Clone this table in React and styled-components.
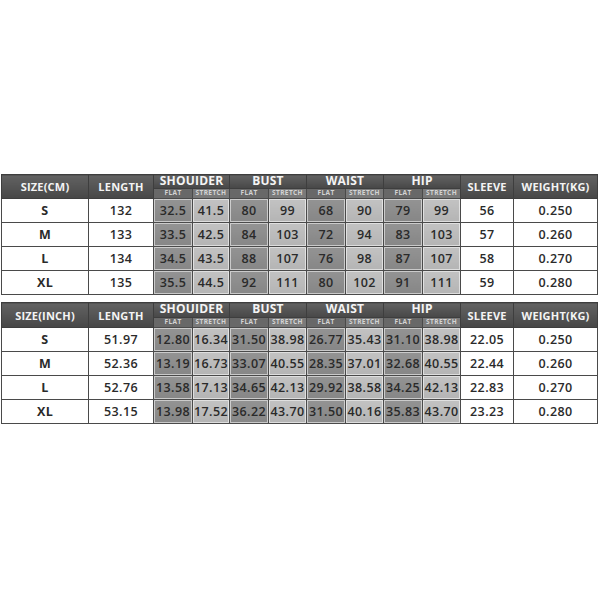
import React from 'react';
import styled, { createGlobalStyle } from 'styled-components';

const GlobalStyle = createGlobalStyle`
    html, body {
        margin: 0;
        padding: 0;
        background: #ffffff;
    }
    body {
        font-family: "Open Sans", "Liberation Sans", sans-serif;
    }
`;

const Page = styled.div`
    width: 600px;
    height: 600px;
    padding: 174px 0 0 1px;
    box-sizing: border-box;
    display: flex;
    flex-direction: column;
    gap: 7px;
`;

const Table = styled.table`
    width: 596px;
    border-collapse: collapse;
    table-layout: fixed;
    color: #222;
`;

const HeadCell = styled.th`
    background: linear-gradient(#626262, #474747);
    color: #f4f4f4;
    font-size: ${(p) => (p.$big ? '12px' : '11px')};
    font-weight: 700;
    padding: 0;
    height: ${(p) => p.$h || 14}px;
    line-height: 1;
    border: 1px solid #3e3e3e;
    text-align: center;
    vertical-align: ${(p) => (p.$group ? 'top' : 'middle')};
    letter-spacing: 0.2px;
    white-space: nowrap;
`;

const SubCell = styled.th`
    background: ${(p) => (p.$stretch ? '#7a7a7a' : '#686868')};
    color: #d4d4d4;
    font-size: 6.5px;
    font-weight: 700;
    height: ${(p) => p.$h || 10}px;
    padding: 0;
    line-height: 1;
    border: 1px solid #4a4a4a;
    border-top: none;
    text-align: center;
    letter-spacing: 0.4px;
    white-space: nowrap;
`;

const Cell = styled.td`
    height: 23px;
    padding: 0;
    text-align: center;
    font-size: 12.5px;
    font-weight: ${(p) => (p.$bold ? 700 : 600)};
    letter-spacing: 0.4px;
    border: 1px solid #4a4a4a;
    background: ${(p) =>
        p.$tone === 'flat' ? 'linear-gradient(#939393, #868686)'
        : p.$tone === 'stretch' ? 'linear-gradient(#c2c2c2, #b4b4b4)'
        : '#ffffff'};
    box-shadow: ${(p) => (p.$tone ? 'inset 0 0 0 1px rgba(255,255,255,0.55)' : 'none')};
    color: #2a2a2a;
    white-space: nowrap;
`;

const groups = ['SHOUIDER', 'BUST', 'WAIST', 'HIP'];

const cmRows = [
    ['S', '132', '32.5', '41.5', '80', '99', '68', '90', '79', '99', '56', '0.250'],
    ['M', '133', '33.5', '42.5', '84', '103', '72', '94', '83', '103', '57', '0.260'],
    ['L', '134', '34.5', '43.5', '88', '107', '76', '98', '87', '107', '58', '0.270'],
    ['XL', '135', '35.5', '44.5', '92', '111', '80', '102', '91', '111', '59', '0.280'],
];

const inchRows = [
    ['S', '51.97', '12.80', '16.34', '31.50', '38.98', '26.77', '35.43', '31.10', '38.98', '22.05', '0.250'],
    ['M', '52.36', '13.19', '16.73', '33.07', '40.55', '28.35', '37.01', '32.68', '40.55', '22.44', '0.260'],
    ['L', '52.76', '13.58', '17.13', '34.65', '42.13', '29.92', '38.58', '34.25', '42.13', '22.83', '0.270'],
    ['XL', '53.15', '13.98', '17.52', '36.22', '43.70', '31.50', '40.16', '35.83', '43.70', '23.23', '0.280'],
];

const widths = [87, 65, 39, 37, 39, 38, 39, 38, 39, 38, 53, 84];

function SizeTable({ unit, rows, headTop, headSub, compact }) {
    return (
        <Table>
            <colgroup>
                {widths.map((w, i) => <col key={i} style={{ width: w }} />)}
            </colgroup>
            <thead>
                <tr>
                    <HeadCell rowSpan={2}>{`SIZE(${unit})`}</HeadCell>
                    <HeadCell rowSpan={2}>LENGTH</HeadCell>
                    {groups.map((g) => (
                        <HeadCell key={g} colSpan={2} $big $group $h={headTop}>{g}</HeadCell>
                    ))}
                    <HeadCell rowSpan={2}>SLEEVE</HeadCell>
                    <HeadCell rowSpan={2}>WEIGHT(KG)</HeadCell>
                </tr>
                <tr>
                    {groups.map((g) => (
                        <React.Fragment key={g}>
                            <SubCell $h={headSub}>FLAT</SubCell>
                            <SubCell $h={headSub} $stretch>STRETCH</SubCell>
                        </React.Fragment>
                    ))}
                </tr>
            </thead>
            <tbody>
                {rows.map((r) => (
                    <tr key={r[0]}>
                        {r.map((v, i) => {
                            const tone = i >= 2 && i <= 9 ? (i % 2 === 0 ? 'flat' : 'stretch') : null;
                            return <Cell key={i} $tone={tone} $bold={i === 0}>{v}</Cell>;
                        })}
                    </tr>
                ))}
            </tbody>
        </Table>
    );
}

export default function App() {
    return (
        <>
            <GlobalStyle />
            <Page>
                <SizeTable unit="CM" rows={cmRows} headTop={13} headSub={9} />
                <SizeTable unit="INCH" rows={inchRows} headTop={14} headSub={9} />
            </Page>
        </>
    );
}
